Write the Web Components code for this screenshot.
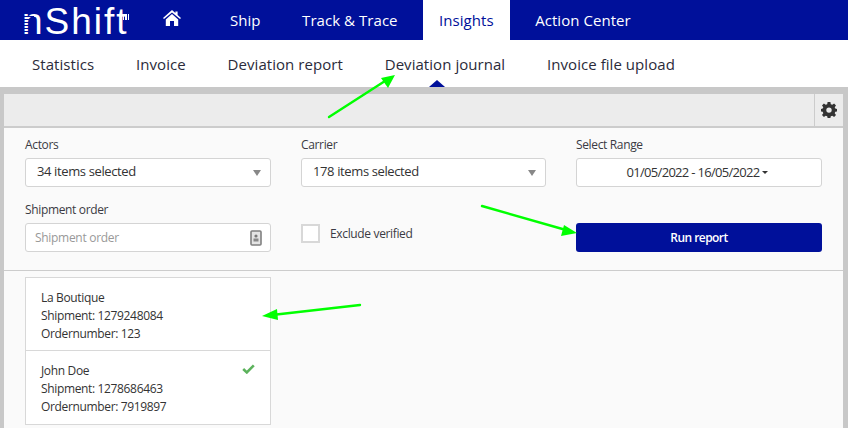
<!DOCTYPE html>
<html>
<head>
<meta charset="utf-8">
<title>Deviation journal</title>
<style>
  html, body { margin: 0; height: 428px; overflow: hidden; }
  body { background: #c8c8c8; font-family: "Open Sans", "Noto Sans", sans-serif; color: #333; position: relative; }
</style>
</head>
<body>
<top-nav>
  <nav-link>Ship</nav-link>
  <nav-link>Track &amp; Trace</nav-link>
  <nav-link active>Insights</nav-link>
  <nav-link>Action Center</nav-link>
</top-nav>
<sub-nav>
  <sub-link>Statistics</sub-link>
  <sub-link>Invoice</sub-link>
  <sub-link>Deviation report</sub-link>
  <sub-link active>Deviation journal</sub-link>
  <sub-link>Invoice file upload</sub-link>
</sub-nav>
<report-panel>
  <filter-field label="Actors"><pick-box>34 items selected</pick-box></filter-field>
  <filter-field label="Carrier"><pick-box>178 items selected</pick-box></filter-field>
  <filter-field label="Select Range"><range-box>01/05/2022 - 16/05/2022</range-box></filter-field>
  <filter-field label="Shipment order"><order-input></order-input></filter-field>
  <check-field>Exclude verified</check-field>
  <run-button>Run report</run-button>
  <result-row slot="results" name="La Boutique" shipment="1279248084" order="123"></result-row>
  <result-row slot="results" name="John Doe" shipment="1278686463" order="7919897" verified></result-row>
</report-panel>
<note-arrows></note-arrows>

<script>
class TopNav extends HTMLElement {
    constructor() {
        super();
        this.attachShadow({ mode: 'open' });
        this.shadowRoot.innerHTML = `
            <style>
                :host { display: flex; height: 40px; background: #00109a; color: #fff; align-items: flex-start; }
                .logo { position: relative; width: 115px; height: 40px; margin-left: 22px; font: 400 37px/40px "Liberation Sans", sans-serif; letter-spacing: 2px; line-height: 43px; }
                .home { display: flex; align-items: center; height: 36px; margin-left: 26px; margin-right: 33px; }
                .lines { position: absolute; left: 0; top: 16px; width: 12px; height: 18px; background: repeating-linear-gradient(#00109a 0 1.5px, transparent 1.5px 3px); }
                .ticks { position: absolute; left: 101px; top: 14px; width: 7px; height: 6px; background: repeating-linear-gradient(90deg, #fff 0 1px, transparent 1px 2.5px); }
                ::slotted(nav-link) { height: 40px; }
            </style>
            <div class="logo">nShift<span class="lines"></span><span class="ticks"></span></div>
            <div class="home">
                <svg width="18" height="16" viewBox="0 0 18 16"><path fill="#fff" d="M9 0 L12.4 3 V1.5 H14.6 V5 L18 8 L17 9 L9 2.4 L1 9 L0 8 Z M2.8 9.4 L9 4 L15.2 9.4 V16 H11 V11 H7 V16 H2.8 Z"/></svg>
            </div>
            <slot></slot>
        `;
    }
}
customElements.define('top-nav', TopNav);

class NavLink extends HTMLElement {
    constructor() {
        super();
        this.attachShadow({ mode: 'open' });
        this.shadowRoot.innerHTML = `
            <style>
                :host { display: flex; align-items: center; padding: 0 16px; margin-right: 9.5px; font-size: 15px; letter-spacing: 0.05px; }
                :host([active]) { background: #fff; color: #00109a; }
            </style>
            <slot></slot>
        `;
    }
}
customElements.define('nav-link', NavLink);

class SubNav extends HTMLElement {
    constructor() {
        super();
        this.attachShadow({ mode: 'open' });
        this.shadowRoot.innerHTML = `
            <style>
                :host { display: flex; height: 47px; background: #fff; padding-left: 32px; gap: 41.9px; }
            </style>
            <slot></slot>
        `;
    }
}
customElements.define('sub-nav', SubNav);

class SubLink extends HTMLElement {
    constructor() {
        super();
        this.attachShadow({ mode: 'open' });
        this.shadowRoot.innerHTML = `
            <style>
                :host { display: block; position: relative; font-size: 15px; line-height: 49px; letter-spacing: 0.05px; color: #2b2b3a; }
                :host([active])::after {
                    content: ""; position: absolute; left: 44px; bottom: 0;
                    border: 8px solid transparent; border-top: 0; border-bottom: 7px solid #00109a;
                }
            </style>
            <slot></slot>
        `;
    }
}
customElements.define('sub-link', SubLink);

class ReportPanel extends HTMLElement {
    constructor() {
        super();
        this.attachShadow({ mode: 'open' });
        this.shadowRoot.innerHTML = `
            <style>
                :host { display: block; margin: 7px 5px 0 4px; background: #fafafa; height: 334px; }
                .bar { display: flex; justify-content: flex-end; height: 32px; background: #ececec; border-bottom: 2px solid #ccc; }
                .gear { width: 27px; padding-right: 1px; display: flex; align-items: center; justify-content: center; border-left: 1px solid #ccc; }
                .form {
                    display: grid; grid-template-columns: 246px 245px 246px; column-gap: 30px;
                    grid-auto-rows: 65px; padding: 8px 21px 0; height: 143px; box-sizing: border-box;
                    border-bottom: 1px solid #ccc;
                }
                .list { width: 246px; margin: 6px 0 0 21px; background: #fff; border: 1px solid #d8d8d8; box-sizing: border-box; }
            </style>
            <div class="bar">
                <div class="gear">
                    <svg width="16" height="16" viewBox="0 0 16 16"><path fill="#333" fill-rule="evenodd" d="M6.6 0 H9.4 L9.8 2.2 L11.3 2.8 L13.1 1.5 L15 3.4 L13.7 5.2 L14.3 6.6 L16 7 V9.4 L14.3 9.8 L13.7 11.3 L15 13.1 L13.1 15 L11.3 13.7 L9.8 14.3 L9.4 16 H6.6 L6.2 14.3 L4.7 13.7 L2.9 15 L1 13.1 L2.3 11.3 L1.7 9.8 L0 9.4 V7 L1.7 6.6 L2.3 5.2 L1 3.4 L2.9 1.5 L4.7 2.8 L6.2 2.2 Z M8 5.4 A2.7 2.7 0 1 0 8 10.8 A2.7 2.7 0 1 0 8 5.4 Z"/></svg>
                </div>
            </div>
            <div class="form"><slot></slot></div>
            <div class="list"><slot name="results"></slot></div>
        `;
    }
}
customElements.define('report-panel', ReportPanel);

class FilterField extends HTMLElement {
    constructor() {
        super();
        this.attachShadow({ mode: 'open' });
    }

    connectedCallback() {
        this.shadowRoot.innerHTML = `
            <style>
                :host { display: block; }
                label { display: block; font-size: 12px; line-height: 16px; letter-spacing: -0.35px; margin: 1px 0 5px; color: #3a3a44; }
            </style>
            <label>${this.getAttribute('label')}</label>
            <slot></slot>
        `;
    }
}
customElements.define('filter-field', FilterField);

const BOX_STYLE = `
    :host {
        display: flex; align-items: center; height: 29px; box-sizing: border-box;
        background: #fff; border: 1px solid #d4d4d4; border-radius: 3px;
        font-size: 13px; color: #333;
    }
`;

class PickBox extends HTMLElement {
    constructor() {
        super();
        this.attachShadow({ mode: 'open' });
        this.shadowRoot.innerHTML = `
            <style>
                ${BOX_STYLE}
                :host { justify-content: space-between; padding: 0 9px 0 11px; letter-spacing: -0.38px; }
                span { margin-bottom: 3px; }
                i { width: 0; height: 0; border: 4px solid transparent; border-top: 6px solid #888; border-bottom: 0; }
            </style>
            <span><slot></slot></span><i></i>
        `;
    }
}
customElements.define('pick-box', PickBox);

class RangeBox extends HTMLElement {
    constructor() {
        super();
        this.attachShadow({ mode: 'open' });
        this.shadowRoot.innerHTML = `
            <style>
                ${BOX_STYLE}
                :host { justify-content: center; gap: 3px; padding-right: 3px; letter-spacing: -0.7px; }
                span { margin-bottom: 1px; }
                i { width: 0; height: 0; border: 3.5px solid transparent; border-top: 3.5px solid #333; border-bottom: 0; }
            </style>
            <span><slot></slot></span><i></i>
        `;
    }
}
customElements.define('range-box', RangeBox);

class OrderInput extends HTMLElement {
    constructor() {
        super();
        this.attachShadow({ mode: 'open' });
        this.shadowRoot.innerHTML = `
            <style>
                ${BOX_STYLE}
                :host { justify-content: space-between; padding: 0 8px 0 9px; font-size: 12px; letter-spacing: -0.3px; color: #999; }
                svg { display: block; }
            </style>
            <span>Shipment order</span>
            <svg width="12" height="16" viewBox="0 0 12 16">
                <rect x="1" y="1" width="10" height="14" rx="1" fill="#e4e4e4" stroke="#808080" stroke-width="1.6"/>
                <circle cx="6" cy="6" r="1.6" fill="#777"/>
                <rect x="3.5" y="8.5" width="5" height="3" fill="#888"/>
            </svg>
        `;
    }
}
customElements.define('order-input', OrderInput);

class CheckField extends HTMLElement {
    constructor() {
        super();
        this.attachShadow({ mode: 'open' });
        this.shadowRoot.innerHTML = `
            <style>
                :host { display: flex; align-items: center; align-self: start; gap: 10px; margin-top: 23px; font-size: 12px; letter-spacing: -0.35px; color: #3a3a44; }
                i { width: 19px; height: 19px; box-sizing: border-box; background: #fff; border: 2px solid #d8d8d8; }
            </style>
            <i></i><span><slot></slot></span>
        `;
    }
}
customElements.define('check-field', CheckField);

class RunButton extends HTMLElement {
    constructor() {
        super();
        this.attachShadow({ mode: 'open' });
        this.shadowRoot.innerHTML = `
            <style>
                :host {
                    display: flex; align-items: center; justify-content: center; align-self: start;
                    height: 29px; margin-top: 22px; background: #00109a; color: #fff;
                    border-radius: 3px; font-size: 12px; font-weight: 600; letter-spacing: -0.55px;
                }
            </style>
            <slot></slot>
        `;
    }
}
customElements.define('run-button', RunButton);

class ResultRow extends HTMLElement {
    constructor() {
        super();
        this.attachShadow({ mode: 'open' });
    }

    connectedCallback() {
        const check = this.hasAttribute('verified')
            ? `<svg class="tick" width="13" height="10" viewBox="0 0 13 10"><path d="M1.2 5 L4.8 8.4 L11.8 1.4" fill="none" stroke="#5cb25c" stroke-width="2.6"/></svg>`
            : '';
        this.shadowRoot.innerHTML = `
            <style>
                :host { display: block; position: relative; height: 73px; box-sizing: border-box; padding: 11px 15px; font-size: 12px; line-height: 18px; letter-spacing: -0.35px; color: #333; }
                :host(:not(:last-child)) { border-bottom: 1px solid #d8d8d8; }
                .tick { position: absolute; right: 15px; top: 13px; }
            </style>
            <div>${this.getAttribute('name')}</div>
            <div>Shipment: ${this.getAttribute('shipment')}</div>
            <div>Ordernumber: ${this.getAttribute('order')}</div>
            ${check}
        `;
    }
}
customElements.define('result-row', ResultRow);

// green annotations drawn over the screenshot
class NoteArrows extends HTMLElement {
    constructor() {
        super();
        this.attachShadow({ mode: 'open' });
        this.shadowRoot.innerHTML = `
            <style>
                :host { position: absolute; left: 0; top: 0; pointer-events: none; }
                svg { display: block; }
            </style>
            <svg width="848" height="428" viewBox="0 0 848 428" fill="#00ff00" stroke="#00ff00" stroke-width="2.4" stroke-linecap="round">
                <line x1="329" y1="117" x2="385" y2="81"/>
                <path stroke="none" d="M395 75 L381 78 L388 88 Z"/>
                <line x1="482" y1="206" x2="566" y2="230"/>
                <path stroke="none" d="M577 233 L564 225 L561 236 Z"/>
                <line x1="360" y1="305" x2="272" y2="315"/>
                <path stroke="none" d="M262 316 L277 309 L278 320 Z"/>
            </svg>
        `;
    }
}
customElements.define('note-arrows', NoteArrows);
</script>
</body>
</html>
